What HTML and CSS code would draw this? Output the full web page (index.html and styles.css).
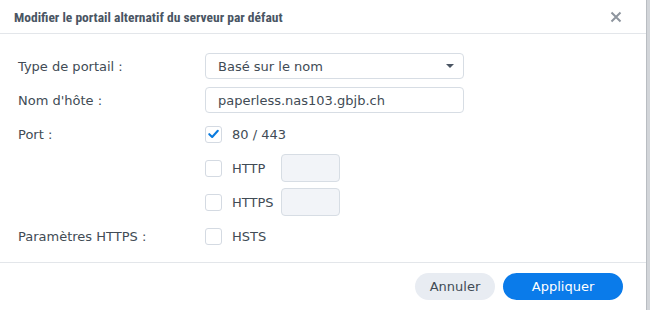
FILE: index.html
```html
<!DOCTYPE html>
<html lang="fr">
  <head>
    <meta charset="UTF-8" />
    <meta name="viewport" content="width=device-width, initial-scale=1.0" />
    <title>Portail alternatif</title>
    <link rel="stylesheet" href="styles.css">
  </head>
  <body>
    <div class="dialog">
      <div class="dialog-header">
        <h2>Modifier le portail alternatif du serveur par défaut</h2>
        <svg class="close" viewBox="0 0 12 12" width="12" height="12"><path d="M1.5 1.5 L10.5 10.5 M10.5 1.5 L1.5 10.5" stroke="#8e959e" stroke-width="2" fill="none"/></svg>
      </div>

      <form class="dialog-body">
        <div class="row">
          <label>Type de portail :</label>
          <div class="select">
            <span>Basé sur le nom</span>
            <span class="caret"></span>
          </div>
        </div>
        <div class="row">
          <label>Nom d'hôte :</label>
          <input class="text" type="text" value="paperless.nas103.gbjb.ch" />
        </div>
        <div class="row">
          <label>Port :</label>
          <div class="check">
            <span class="box checked">
              <svg viewBox="0 0 16 16" width="16" height="16"><path d="M3.5 8.2 L6.6 11.2 L12.6 4.6" fill="none" stroke="#0a7bdf" stroke-width="2.2" stroke-linecap="round" stroke-linejoin="round"/></svg>
            </span>
            <span>80 / 443</span>
          </div>
        </div>
        <div class="row">
          <label></label>
          <div class="check">
            <span class="box"></span>
            <span class="check-label">HTTP</span>
            <input class="port" type="text" />
          </div>
        </div>
        <div class="row">
          <label></label>
          <div class="check">
            <span class="box"></span>
            <span class="check-label">HTTPS</span>
            <input class="port" type="text" />
          </div>
        </div>
        <div class="row">
          <label>Paramètres HTTPS :</label>
          <div class="check">
            <span class="box"></span>
            <span>HSTS</span>
          </div>
        </div>
      </form>

      <div class="dialog-footer">
        <button type="button" class="btn cancel">Annuler</button>
        <button type="button" class="btn apply">Appliquer</button>
      </div>
    </div>
    <div class="backdrop"></div>
  </body>
</html>
```

FILE: styles.css
```css
*,
*::before,
*::after {
  box-sizing: border-box;
}

body {
  margin: 0;
  display: flex;
  height: 310px;
  background: #fff;
  font-family: 'DejaVu Sans', Verdana, sans-serif;
  font-size: 13px;
  color: #414b55;
  overflow: hidden;
}

.dialog {
  width: 646px;
  display: flex;
  flex-direction: column;
  background: #fff;
}

.backdrop {
  flex: 1;
  background: #d2d5d9;
  border-left: 1px solid #b9bdc2;
}

.dialog-header {
  height: 34px;
  display: flex;
  align-items: center;
  justify-content: space-between;
  padding: 0 24px 0 14px;
  border-bottom: 1px solid #e3e6ea;
}
.dialog-header h2 {
  margin: 0;
  font-family: 'Liberation Sans Narrow', 'Roboto Condensed', 'Liberation Sans', sans-serif;
  font-size: 13.5px;
  font-weight: bold;
  color: #4a5563;
}
.close {
  margin-top: 1px;
}

.dialog-body {
  flex: 1;
  padding: 19px 18px 0;
  display: flex;
  flex-direction: column;
  gap: 8px;
  border-bottom: 1px solid #e3e6ea;
}

.row {
  display: flex;
  align-items: center;
  height: 26px;
}
.row > label {
  width: 187px;
  flex: none;
}

.select,
.text {
  width: 259px;
  height: 26px;
  border: 1px solid #d7dde4;
  border-radius: 4px;
  padding: 0 12px;
  font: inherit;
  color: inherit;
  background: #fff;
}
.select {
  display: flex;
  align-items: center;
  justify-content: space-between;
  padding-right: 9px;
}
.caret {
  width: 0;
  height: 0;
  border-left: 4.5px solid transparent;
  border-right: 4.5px solid transparent;
  border-top: 4.5px solid #4a5563;
}

.check {
  display: flex;
  align-items: center;
  gap: 10px;
}
.box {
  width: 17px;
  height: 17px;
  border: 1px solid #d4dae2;
  border-radius: 3px;
  display: flex;
  align-items: center;
  justify-content: center;
  background: #fff;
}
.check-label {
  width: 49px;
}
.port {
  width: 59px;
  height: 28px;
  margin: -1px 0 -1px -10px;
  border: 1px solid #d7dde4;
  border-radius: 4px;
  background: #f2f4f8;
}

.dialog-footer {
  height: 47px;
  display: flex;
  justify-content: flex-end;
  align-items: center;
  gap: 8px;
  padding: 0 23px 0 0;
}
.btn {
  height: 27px;
  border: none;
  border-radius: 14px;
  font-family: 'DejaVu Sans', Verdana, sans-serif;
  font-size: 13px;
}
.cancel {
  width: 80px;
  background: #e8ecf2;
  color: #414b55;
}
.apply {
  width: 120px;
  background: #0a7bea;
  color: #fff;
}
```
